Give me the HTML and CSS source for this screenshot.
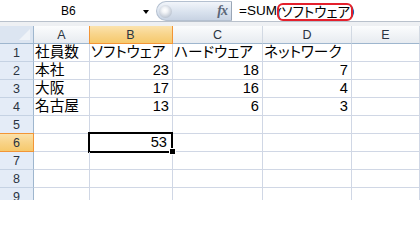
FILE: index.html
```html
<!DOCTYPE html>
<html lang="ja">
<head>
<meta charset="utf-8">
<link rel="stylesheet" href="styles.css">
</head>
<body>
<div class="app">
  <div class="fbar">
    <div class="namebox"><span class="ref">B6</span><span class="arrow"></span></div>
    <div class="mid"><span class="knob"></span><span class="fx">fx</span></div>
    <div class="formula"><span class="fn">=SUM</span><span class="hl">(ソフトウェア</span><span class="fn">)</span></div>
  </div>
  <div class="band"></div>
  <div class="sheet">
    <div class="corner"><span class="tri"></span></div>
    <div class="ch">A</div>
    <div class="ch sel">B</div>
    <div class="ch">C</div>
    <div class="ch">D</div>
    <div class="ch">E</div>

    <div class="rh">1</div>
    <div class="c">社員数</div>
    <div class="c kana">ソフトウェア</div>
    <div class="c kana">ハードウェア</div>
    <div class="c kana">ネットワーク</div>
    <div class="c"></div>

    <div class="rh">2</div>
    <div class="c">本社</div>
    <div class="c n">23</div>
    <div class="c n">18</div>
    <div class="c n">7</div>
    <div class="c"></div>

    <div class="rh">3</div>
    <div class="c">大阪</div>
    <div class="c n">17</div>
    <div class="c n">16</div>
    <div class="c n">4</div>
    <div class="c"></div>

    <div class="rh">4</div>
    <div class="c">名古屋</div>
    <div class="c n">13</div>
    <div class="c n">6</div>
    <div class="c n">3</div>
    <div class="c"></div>

    <div class="rh">5</div>
    <div class="c"></div>
    <div class="c"></div>
    <div class="c"></div>
    <div class="c"></div>
    <div class="c"></div>

    <div class="rh sel">6</div>
    <div class="c"></div>
    <div class="c n active">53<span class="handle"></span></div>
    <div class="c"></div>
    <div class="c"></div>
    <div class="c"></div>

    <div class="rh">7</div>
    <div class="c"></div>
    <div class="c"></div>
    <div class="c"></div>
    <div class="c"></div>
    <div class="c"></div>

    <div class="rh">8</div>
    <div class="c"></div>
    <div class="c"></div>
    <div class="c"></div>
    <div class="c"></div>
    <div class="c"></div>

    <div class="rh">9</div>
    <div class="c"></div>
    <div class="c"></div>
    <div class="c"></div>
    <div class="c"></div>
    <div class="c"></div>
  </div>
</div>
</body>
</html>
```

FILE: styles.css
```css
html, body {
  margin: 0;
  padding: 0;
  background: #ffffff;
}
body {
  width: 420px;
  height: 200px;
  overflow: hidden;
  font-family: "Liberation Sans", "Noto Sans CJK JP", sans-serif;
}
.app {
  width: 420px;
  height: 200px;
  overflow: hidden;
}

/* formula bar */
.fbar {
  display: flex;
  height: 21px;
  border-bottom: 1px solid #b9c1cc;
  background: #ffffff;
}
.namebox {
  width: 156px;
  display: flex;
  align-items: center;
  background: #ffffff;
  font-size: 12px;
  color: #000;
}
.ref {
  margin-left: 61px;
}
.arrow {
  margin-left: auto;
  margin-right: 7px;
  width: 0;
  height: 0;
  border-left: 3.5px solid transparent;
  border-right: 3.5px solid transparent;
  border-top: 4px solid #000;
  margin-top: 2px;
}
.mid {
  width: 76px;
  display: flex;
  align-items: center;
  border-radius: 10px 0 0 10px;
  background: linear-gradient(#f2f5fa, #d9e2ee 55%, #c8d3e3);
  border: 1px solid #b4c0d0;
  border-right: 1px solid #9aa6b6;
  box-sizing: border-box;
  margin-top: 1px;
}
.knob {
  width: 13px;
  height: 13px;
  margin-left: 2px;
  border-radius: 50%;
  background: radial-gradient(circle at 45% 40%, #ffffff 0, #f2f4f7 25%, #b9c2cf 75%, #9ea9b8 100%);
}
.fx {
  margin-left: auto;
  margin-right: 4px;
  font-family: "Liberation Serif", serif;
  font-style: italic;
  font-weight: bold;
  font-size: 14px;
  color: #5b6678;
  letter-spacing: -1px;
}
.formula {
  flex: 1;
  display: flex;
  align-items: stretch;
  padding-left: 7px;
  font-size: 13.5px;
  color: #000;
  font-feature-settings: "palt";
}
.fn {
  display: flex;
  align-items: center;
}
.hl {
  position: relative;
  display: flex;
  align-items: center;
}
.hl::after {
  content: "";
  position: absolute;
  left: 0;
  right: -3px;
  top: 3px;
  bottom: 0;
  border: 2px solid #e4202c;
  border-radius: 6px;
}

.band {
  height: 4px;
  background: #eef0f3;
}

/* sheet */
.sheet {
  display: grid;
  grid-template-columns: 34px 56px 83px 90px 89px 1fr;
  grid-auto-rows: 18px;
}
.corner {
  position: relative;
  box-sizing: border-box;
  background: #dce5f1;
  border-right: 1px solid #9eb6ce;
  border-bottom: 1px solid #9eb6ce;
}
.tri {
  position: absolute;
  right: 3px;
  bottom: 3px;
  width: 0;
  height: 0;
  border-left: 11px solid transparent;
  border-bottom: 11px solid #eff3f8;
}
.ch {
  box-sizing: border-box;
  display: flex;
  align-items: center;
  justify-content: center;
  background: linear-gradient(#fbfcfd, #e7ebf0);
  border-right: 1px solid #d2d9e3;
  border-bottom: 1px solid #9eb6ce;
  font-size: 12.5px;
  color: #2a3442;
}
.ch.sel {
  background: linear-gradient(#fbe3ae, #f8d48a 50%, #f6c96c);
  border-right: 1px solid #f29536;
  border-bottom: 1px solid #f29536;
  box-shadow: inset 1px 0 0 #f29536;
  margin-left: -1px;
}
.rh {
  box-sizing: border-box;
  display: flex;
  align-items: center;
  justify-content: center;
  background: #e4ecf7;
  border-right: 1px solid #9eb6ce;
  border-bottom: 1px solid #c5d2e3;
  font-size: 12.5px;
  color: #2a3442;
  padding-top: 1px;
}
.rh.sel {
  background: linear-gradient(#fbe3ae, #f8d48a 50%, #f6c96c);
  border-right: 1px solid #f29536;
  border-bottom: 1px solid #f29536;
  box-shadow: inset 0 1px 0 #f29536;
  margin-top: -1px;
}
.c {
  position: relative;
  box-sizing: border-box;
  border-right: 1px solid #d0d7e5;
  border-bottom: 1px solid #d0d7e5;
  padding: 0 3px 0 1px;
  font-size: 14.67px;
  line-height: 17px;
  color: #000;
  white-space: nowrap;
  overflow: hidden;
  font-feature-settings: "palt";
}
.c.n {
  text-align: right;
}
.c.active {
  overflow: visible;
  padding-right: 5px;
}
.c.active::before {
  content: "";
  position: absolute;
  left: -2px;
  right: -1px;
  top: -2px;
  bottom: -2px;
  border: 2px solid #000;
  pointer-events: none;
}
.handle {
  position: absolute;
  right: -3px;
  bottom: -3px;
  width: 5px;
  height: 5px;
  background: #000;
  box-shadow: 0 0 0 1px #fff;
  z-index: 2;
}
```
